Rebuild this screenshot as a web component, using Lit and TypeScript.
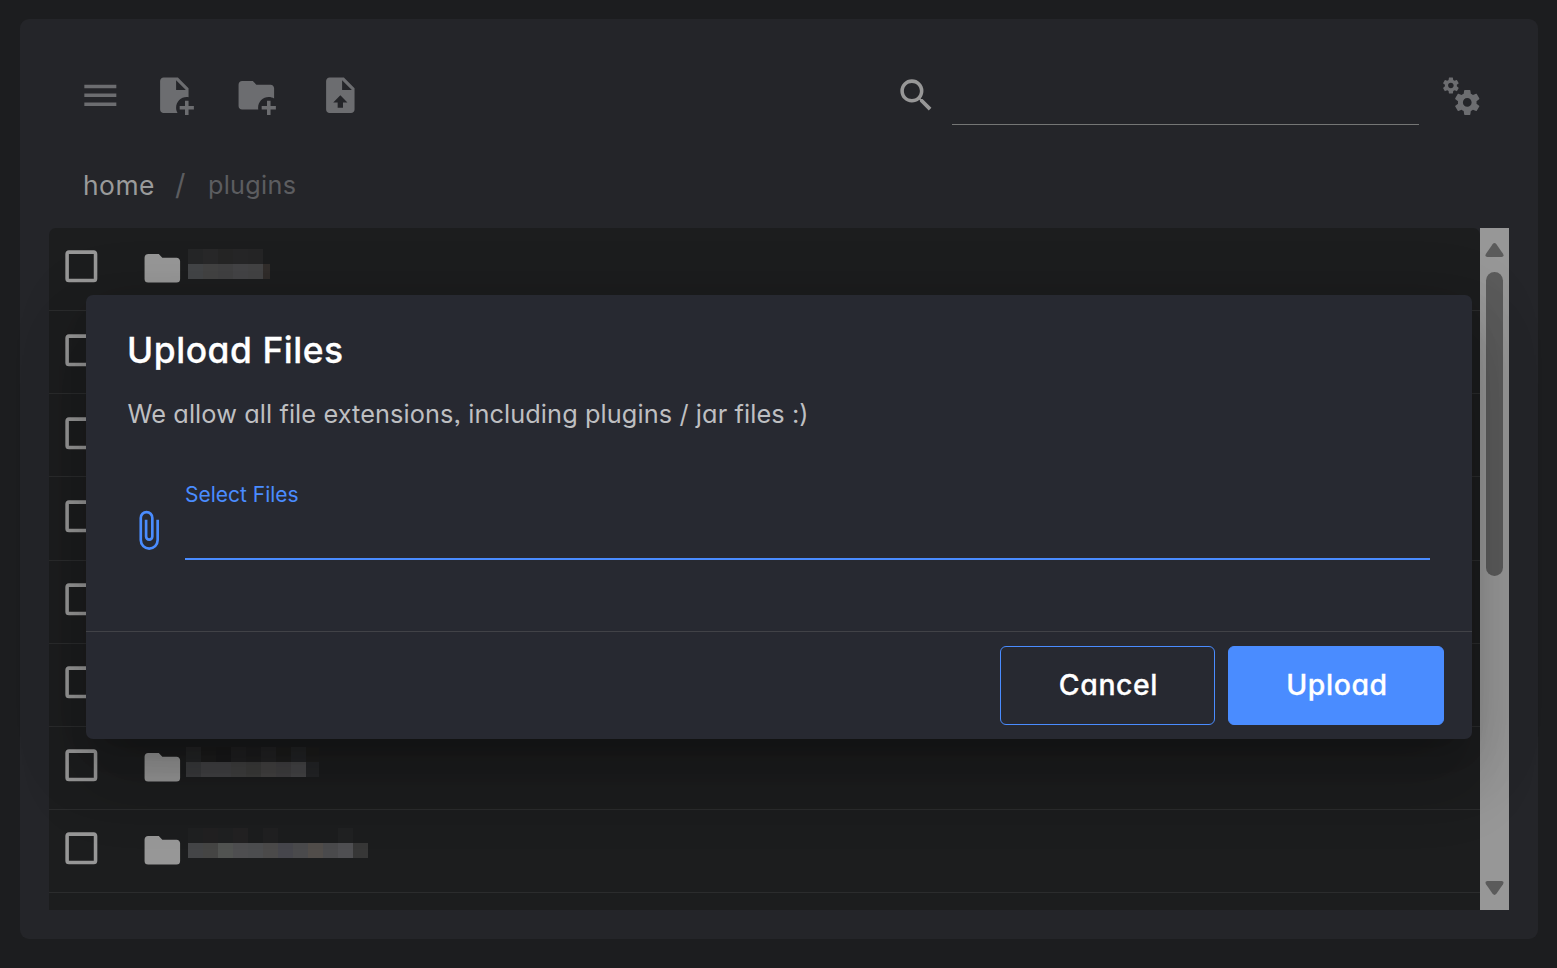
import { LitElement, html, css, svg } from "lit";
import { customElement, property } from "lit/decorators.js";

const ICONS: Record<string, string> = {
  menu: "M3,6H21V8H3V6M3,11H21V13H3V11M3,16H21V18H3V16Z",
  filePlus:
    "M14 2H6C4.89 2 4 2.89 4 4V20C4 21.11 4.89 22 6 22H13.81C13.28 21.09 13 20.05 13 19C13 15.69 15.69 13 19 13C19.34 13 19.67 13.03 20 13.08V8L14 2M13 9V3.5L18.5 9H13M23 20H20V23H18V20H15V18H18V15H20V18H23V20Z",
  folderPlus:
    "M13 19C13 19.34 13.04 19.67 13.09 20H4C2.9 20 2 19.11 2 18V6C2 4.89 2.89 4 4 4H10L12 6H20C21.1 6 22 6.89 22 8V13.81C21.12 13.3 20.1 13 19 13C15.69 13 13 15.69 13 19M20 18V15H18V18H15V20H18V23H20V20H23V18H20Z",
  fileUpload:
    "M14,2H6C4.89,2 4,2.89 4,4V20C4,21.11 4.89,22 6,22H18C19.11,22 20,21.11 20,20V8L14,2M13.5,16V19H10.5V16H8L12,12L16,16H13.5M13,9V3.5L18.5,9H13Z",
  magnify:
    "M9.5,3A6.5,6.5 0 0,1 16,9.5C16,11.11 15.41,12.59 14.44,13.73L14.71,14H15.5L20.5,19L19,20.5L14,15.5V14.71L13.73,14.44C12.59,15.41 11.11,16 9.5,16A6.5,6.5 0 0,1 3,9.5A6.5,6.5 0 0,1 9.5,3M9.5,5C7,5 5,7 5,9.5C5,12 7,14 9.5,14C12,14 14,12 14,9.5C14,7 12,5 9.5,5Z",
  cogs: "M15.9,18.45C17.25,18.45 18.35,17.35 18.35,16C18.35,14.65 17.25,13.55 15.9,13.55C14.54,13.55 13.45,14.65 13.45,16C13.45,17.35 14.54,18.45 15.9,18.45M21.1,16.68L22.58,17.84C22.71,17.95 22.75,18.13 22.66,18.29L21.26,20.71C21.17,20.86 21,20.92 20.83,20.86L19.09,20.16C18.73,20.44 18.33,20.67 17.91,20.85L17.64,22.7C17.62,22.87 17.47,23 17.3,23H14.5C14.32,23 14.18,22.87 14.15,22.7L13.89,20.85C13.46,20.67 13.07,20.44 12.71,20.16L10.96,20.86C10.81,20.92 10.62,20.86 10.54,20.71L9.14,18.29C9.05,18.13 9.09,17.95 9.22,17.84L10.7,16.68L10.65,16L10.7,15.31L9.22,14.16C9.09,14.05 9.05,13.86 9.14,13.71L10.54,11.29C10.62,11.13 10.81,11.07 10.96,11.13L12.71,11.84C13.07,11.56 13.46,11.32 13.89,11.15L14.15,9.29C14.18,9.13 14.32,9 14.5,9H17.3C17.47,9 17.62,9.13 17.64,9.29L17.91,11.15C18.33,11.32 18.73,11.56 19.09,11.84L20.83,11.13C21,11.07 21.17,11.13 21.26,11.29L22.66,13.71C22.75,13.86 22.71,14.05 22.58,14.16L21.1,15.31L21.15,16L21.1,16.68M6.69,8.07C7.56,8.07 8.26,7.37 8.26,6.5C8.26,5.63 7.56,4.92 6.69,4.92A1.58,1.58 0 0,0 5.11,6.5C5.11,7.37 5.82,8.07 6.69,8.07M10.03,6.94L11,7.68C11.07,7.75 11.09,7.87 11.03,7.97L10.13,9.53C10.08,9.63 9.96,9.67 9.86,9.63L8.74,9.18L8,9.62L7.81,10.81C7.79,10.92 7.7,11 7.59,11H5.79C5.67,11 5.58,10.92 5.56,10.81L5.4,9.62L4.64,9.18L3.52,9.63C3.41,9.67 3.3,9.63 3.24,9.53L2.34,7.97C2.28,7.87 2.31,7.75 2.39,7.68L3.34,6.94L3.31,6.5L3.34,6.06L2.39,5.32C2.31,5.25 2.28,5.13 2.34,5.03L3.24,3.47C3.3,3.37 3.41,3.33 3.52,3.37L4.63,3.82L5.4,3.38L5.56,2.19C5.58,2.08 5.67,2 5.79,2H7.59C7.7,2 7.79,2.08 7.81,2.19L8,3.38L8.74,3.82L9.86,3.37C9.96,3.33 10.08,3.37 10.13,3.47L11.03,5.03C11.09,5.13 11.07,5.25 11,5.32L10.03,6.06L10.06,6.5L10.03,6.94Z",
  checkbox:
    "M19,3H5C3.89,3 3,3.89 3,5V19A2,2 0 0,0 5,21H19A2,2 0 0,0 21,19V5C21,3.89 20.1,3 19,3M19,5V19H5V5H19Z",
  folder:
    "M10,4H4C2.89,4 2,4.89 2,6V18A2,2 0 0,0 4,20H20A2,2 0 0,0 22,18V8C22,6.89 21.1,6 20,6H12L10,4Z",
  paperclip:
    "M16.5,6V17.5A4,4 0 0,1 12.5,21.5A4,4 0 0,1 8.5,17.5V5A2.5,2.5 0 0,1 11,2.5A2.5,2.5 0 0,1 13.5,5V15.5A1,1 0 0,1 12.5,16.5A1,1 0 0,1 11.5,15.5V6H10V15.5A2.5,2.5 0 0,0 12.5,18A2.5,2.5 0 0,0 15,15.5V5A4,4 0 0,0 11,1A4,4 0 0,0 7,5V17.5A5.5,5.5 0 0,0 12.5,23A5.5,5.5 0 0,0 18,17.5V6H16.5Z",
};

@customElement("mdi-icon")
class MdiIcon extends LitElement {
  @property() name = "";
  static styles = css`
    :host { display: block; flex: none; width: 42.67px; height: 42.67px; }
    svg { display: block; width: 100%; height: 100%; fill: currentColor; }
  `;
  render() {
    return html`<svg viewBox="0 0 24 24">${svg`<path d=${ICONS[this.name]}></path>`}</svg>`;
  }
}

interface Mosaic {
  inset: number;
  offset: number;
  width: number;
  top: string[];
  bottom: string[];
}

/* Redacted names: two strips of 15px cells each. */
const ROWS: (Mosaic | null)[] = [
  {
    inset: 4.5, offset: 3.8, width: 82,
    top: ["#252627", "#282829", "#252525", "#262627", "#252526", "transparent"],
    bottom: ["#434547", "#434343", "#414142", "#444446", "#434344", "#312d2b"],
  },
  null, null, null, null, null,
  {
    inset: 2.5, offset: 2.9, width: 133,
    top: ["#242526", "#1c1c1c", "#19191a", "#212122", "#1e1e1f", "#232324", "#1e1e1d", "#232426", "#1e1e1d"],
    bottom: ["#3a3b3d", "#424244", "#424244", "#404040", "#3d3d3c", "#444343", "#414042", "#464648", "#252628"],
  },
  {
    inset: 4.5, offset: 0.8, width: 180,
    top: ["#1f2021", "#212021", "#1f2021", "#222122", "transparent", "#202021", "transparent", "transparent", "transparent", "transparent", "#202122", "transparent"],
    bottom: ["#444547", "#454544", "#515351", "#4e4e50", "#4c4d4f", "#4b4a4a", "#46464c", "#4a4a4c", "#514d4a", "#4a4a4c", "#4f4f52", "#373737"],
  },
];

@customElement("app-root")
class AppRoot extends LitElement {
  static styles = css`
    :host {
      display: block;
      position: relative;
      width: 1557px;
      height: 968px;
      box-sizing: border-box;
      padding: 19px 19px 29px 20px;
      overflow: hidden;
      background: #1c1d1f;
      font-family: "Inter", "Open Sans", sans-serif;
      font-feature-settings: "cv11", "ss03";
    }
    * { box-sizing: border-box; }
    .panel {
      height: 920px;
      border-radius: 9px;
      background: #242529;
      padding: 0 29px;
    }
    .toolbar {
      display: flex;
      align-items: center;
      height: 152px;
      padding: 0 27.2px 0 30.4px;
      color: #6c6d70;
    }
    .file-new { margin-left: 30.5px; }
    .folder-new { margin-left: 40.2px; }
    .file-up { margin-left: 40.8px; }
    .search { margin-left: auto; color: #979797; }
    .field {
      width: 467px;
      height: 59px;
      margin: 0 20.1px 0 14.5px;
      border-bottom: 1px solid #757675;
    }
    .crumbs {
      display: flex;
      height: 57px;
      padding: 0 0 0 34px;
      line-height: 28px;
      font-size: 25.2px;
      color: #5c5d60;
    }
    .home { color: #9a9b9b; width: 92px; font-size: 26.4px; letter-spacing: 0.5px; }
    .slash { width: 33px; font-size: 29px; }
    .here { letter-spacing: 0.3px; }
    .table { display: flex; height: 682px; }
    .rows {
      flex: 1;
      overflow: hidden;
      border-radius: 7px 7px 0 0;
      background: #1c1d1e;
    }
    .row {
      display: flex;
      height: 83.15px;
      border-bottom: 1px solid #2b2c2d;
      padding: 17.4px 0 0 11.4px;
      color: #979797;
    }
    .row-folder { margin: 1.4px 0 0 37.8px; }
    .strip {
      display: grid;
      grid-auto-flow: column;
      grid-auto-columns: 15px;
      height: 15px;
      overflow: hidden;
    }
    .scrollbar {
      width: 29px;
      padding: 15px 0;
      background: #979797;
      display: flex;
      flex-direction: column;
      align-items: center;
    }
    .arrow { display: block; width: 19px; height: 14px; fill: #5b5b5b; }
    .thumb {
      width: 17px;
      height: 304px;
      margin: 15px 0 auto;
      border-radius: 9px;
      background: #5b5b5b;
    }
    .dialog {
      position: absolute;
      left: 86px;
      top: 295px;
      width: 1386px;
      height: 444px;
      border-radius: 7px;
      background: #272931;
      box-shadow: 0 20px 27px -13px rgba(0, 0, 0, 0.2),
        0 43px 68px 5px rgba(0, 0, 0, 0.14),
        0 16px 70px 8px rgba(0, 0, 0, 0.12);
    }
    .body { height: 336px; padding: 34px 42px 0; }
    .title {
      margin: 0 0 0 -1px;
      font-size: 35.4px;
      line-height: 44px;
      font-weight: 500;
      letter-spacing: 0.55px;
      color: #fff;
      -webkit-text-stroke: 0.3px #fff;
    }
    .text {
      margin: 23px 0 0 -0.5px;
      font-size: 25.3px;
      line-height: 36px;
      letter-spacing: 0.1px;
      color: #bebfc1;
    }
    .files { display: flex; margin-top: 51px; color: #4a8cff; }
    .clip { margin: 25.6px 0 0 -1.4px; }
    .input {
      flex: 1;
      height: 77px;
      margin-left: 15.7px;
      border-bottom: 2px solid #4a8cff;
    }
    .label { font-size: 21px; line-height: 24px; }
    .actions {
      display: flex;
      justify-content: flex-end;
      gap: 13px;
      padding: 14px 28px 0;
      border-top: 1px solid #414247;
    }
    .btn {
      width: 216px;
      height: 79px;
      border: 1px solid #4a8cff;
      border-radius: 6px;
      background: transparent;
      color: #fff;
      font: inherit;
      font-feature-settings: inherit;
      font-size: 28.4px;
      font-weight: 500;
      letter-spacing: 0.6px;
      padding: 0 0 2px 2px;
      -webkit-text-stroke: 0.3px #fff;
    }
    .cancel { width: 215px; }
    .upload { background: #4a8cff; }
  `;

  private mosaic(m: Mosaic) {
    const strip = (cells: string[]) => html`<div class="strip" style="width:${m.width}px">
      ${cells.map((c) => html`<span style="background:${c}"></span>`)}
    </div>`;
    return html`<div style="padding:${m.offset}px 0 0 ${m.inset}px">${strip(m.top)}${strip(m.bottom)}</div>`;
  }

  render() {
    return html`
      <div class="panel">
        <div class="toolbar">
          <mdi-icon name="menu"></mdi-icon>
          <mdi-icon class="file-new" name="filePlus"></mdi-icon>
          <mdi-icon class="folder-new" name="folderPlus"></mdi-icon>
          <mdi-icon class="file-up" name="fileUpload"></mdi-icon>
          <mdi-icon class="search" name="magnify"></mdi-icon>
          <div class="field"></div>
          <mdi-icon name="cogs"></mdi-icon>
        </div>
        <div class="crumbs">
          <span class="home">home</span><span class="slash">/</span><span class="here">plugins</span>
        </div>
        <div class="table">
          <div class="rows">
            ${ROWS.map(
              (m) => html`<div class="row">
                <mdi-icon name="checkbox"></mdi-icon>
                <mdi-icon class="row-folder" name="folder"></mdi-icon>
                ${m ? this.mosaic(m) : ""}
              </div>`
            )}
          </div>
          <div class="scrollbar">
            <svg class="arrow" viewBox="0 0 19 14"><path d="M7.6 1.2Q9.5-1 11.4 1.2L18 10.8Q19.6 13.8 16.5 14H2.5Q-.6 13.8 1 10.8Z"></path></svg>
            <div class="thumb"></div>
            <svg class="arrow" viewBox="0 0 19 14"><path d="M7.6 12.8Q9.5 15 11.4 12.8L18 3.2Q19.6.2 16.5 0H2.5Q-.6.2 1 3.2Z"></path></svg>
          </div>
        </div>
      </div>
      <div class="dialog">
        <div class="body">
          <h2 class="title">Upload Files</h2>
          <p class="text">We allow all file extensions, including plugins / jar files :)</p>
          <div class="files">
            <mdi-icon class="clip" name="paperclip"></mdi-icon>
            <div class="input"><div class="label">Select Files</div></div>
          </div>
        </div>
        <div class="actions">
          <button class="btn cancel">Cancel</button>
          <button class="btn upload">Upload</button>
        </div>
      </div>
    `;
  }
}
